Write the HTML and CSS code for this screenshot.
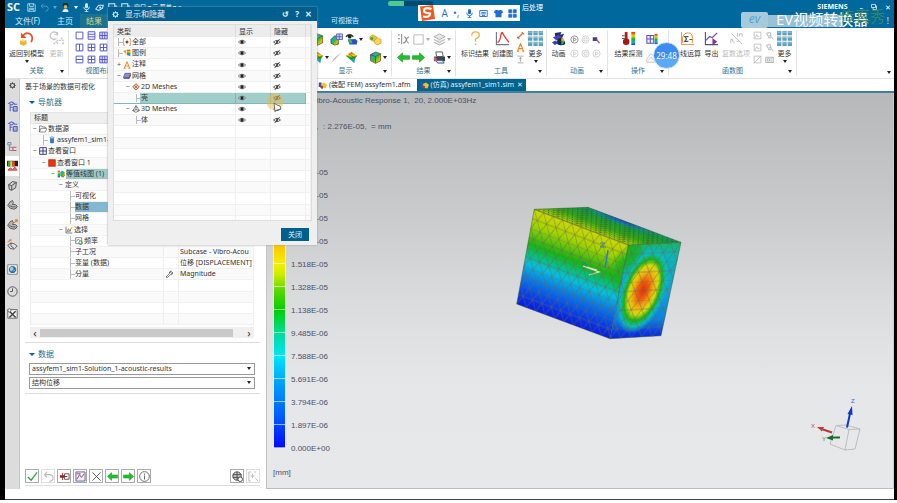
FILE: index.html
```
<!DOCTYPE html>
<html lang="zh-CN">
<head>
<meta charset="utf-8">
<title>Simcenter 后处理</title>
<link rel="stylesheet" href="styles.css">
</head>
<body>
<svg class="defs" aria-hidden="true">
  <defs>
    <linearGradient id="rain" x1="0" y1="0" x2="0" y2="1"><stop offset="0" stop-color="#e02a10"/><stop offset=".3" stop-color="#f4d000"/><stop offset=".55" stop-color="#19b52a"/><stop offset=".8" stop-color="#12a8e8"/><stop offset="1" stop-color="#1a35d8"/></linearGradient>
    <linearGradient id="rainD" x1="0" y1="0" x2="1" y2="1"><stop offset="0" stop-color="#1d3fe0"/><stop offset=".3" stop-color="#16b0c8"/><stop offset=".55" stop-color="#39c022"/><stop offset=".8" stop-color="#f5c400"/><stop offset="1" stop-color="#e02a10"/></linearGradient>
    <symbol id="gear" viewBox="0 0 12 12"><circle cx="6" cy="6" r="3.4" fill="none" stroke="currentColor" stroke-width="1.8"/><path d="M6 .5v2M6 9.5v2M.5 6h2M9.5 6h2M2.1 2.1l1.4 1.4M8.5 8.5l1.4 1.4M9.9 2.1L8.500 3.500M3.500 8.500L2.100 9.900" stroke="currentColor" stroke-width="1.6"/></symbol>
    <symbol id="eye" viewBox="0 0 12 12"><path d="M.5 6Q6 .5 11.500 6Q6 11.500 .5 6z" fill="#fff" stroke="#444" stroke-width="1"/><circle cx="6" cy="6" r="2.600" fill="#222"/></symbol>
    <symbol id="hid" viewBox="0 0 12 12"><path d="M.8 6Q6 1 11.200 6Q6 11 .8 6z" fill="none" stroke="#444" stroke-width="1.300"/><circle cx="6" cy="6" r="1.800" fill="#666"/><path d="M2.500 10.500l7.500-9" stroke="#333" stroke-width="1.300"/></symbol>
    <symbol id="save" viewBox="0 0 12 12"><path d="M1 1h8.500L11 2.500V11H1zM3.500 1v3.500h5V1M3 11V7h6v4M4 8.500h4" fill="none" stroke="currentColor"/></symbol>
    <symbol id="undo" viewBox="0 0 12 12"><path d="M4.500 1L1.500 4l3 3M1.500 4h5.500q4 0 4 3.500T7 11" fill="none" stroke="currentColor" stroke-width="1.200"/></symbol>
    <symbol id="mic" viewBox="0 0 12 12"><rect x="4" y="0" width="4" height="7" rx="2" fill="currentColor"/><path d="M2.300 5q0 4 3.700 4t3.700-4M6 9v2.500M3.500 11.500h5" fill="none" stroke="currentColor" stroke-width="1.200"/></symbol>
    <symbol id="head" viewBox="0 0 12 12"><path d="M3 0h6l1 4-2 3H4L2 4z" fill="#1b2b38"/><circle cx="6" cy="5" r="2.500" fill="#d6b24a"/><path d="M2 12q0-4 4-4t4 4z" fill="#eee"/></symbol>
    <symbol id="tag" viewBox="0 0 12 12"><path d="M1 8l4-5h6l-1 4-5 3z" fill="none" stroke="currentColor" stroke-width="1.400"/><circle cx="7" cy="6" r="1.500" fill="currentColor"/></symbol>
    <symbol id="win" viewBox="0 0 12 12"><path d="M1 1h8v6H1zM4 7v4h7V4H9" fill="none" stroke="currentColor" stroke-width="1.400"/></symbol>
    <symbol id="ret" viewBox="0 0 16 16"><path d="M4 5.500Q7 .5 11.500 3T13 12" fill="none" stroke="#e0522c" stroke-width="1.800"/><path d="M2 1.500v6h6z" fill="#e0522c"/><path d="M1 10.500l3-1.500 4 1v4l-3 1.800-4-1.300z" fill="#f2b32e"/><path d="M1 10.500l4 1 3-1.500-4-1z" fill="#ffe08a"/></symbol>
    <symbol id="upd" viewBox="0 0 16 16"><path d="M9 3.500A4 4 0 1 0 8 8M9 1v3H6" fill="none" stroke="#c4c4c4" stroke-width="1.300"/><path d="M5 14l3-3M9 14v-4h6v4M13 7l2 3" fill="none" stroke="#c4c4c4" stroke-width="1.500" stroke-dasharray="2 1"/></symbol>
    <symbol id="l1" viewBox="0 0 12 12"><path d="M1.500 1.500h9v9h-9z" fill="#fff" stroke="#5558c4" stroke-width="1.300"/></symbol>
    <symbol id="l2" viewBox="0 0 12 12"><path d="M1.500 1h9v10h-9zM1.500 4.300h9M1.500 7.700h9" fill="#fff" stroke="#5558c4" stroke-width="1.300"/></symbol>
    <symbol id="l3" viewBox="0 0 12 12"><path d="M1.500 1.500h9v9h-9zM6 1.500v9" fill="#fff" stroke="#5558c4" stroke-width="1.300"/></symbol>
    <symbol id="l4" viewBox="0 0 12 12"><path d="M1.500 1.500h9v9h-9zM6 1.500v9M1.500 6h9" fill="#fff" stroke="#5558c4" stroke-width="1.300"/></symbol>
    <symbol id="l5" viewBox="0 0 12 12"><path d="M1 1.500h10v9H1zM4.300 1.500v9M7.700 1.500v9M1 6h10" fill="#dfe0ff" stroke="#5558c4" stroke-width="1.300"/></symbol>
    <symbol id="l6" viewBox="0 0 12 12"><path d="M1.500 1.500h9v9h-9zM1.500 6h9" fill="#fff" stroke="#5558c4" stroke-width="1.300"/></symbol>
    <symbol id="cubeA" viewBox="0 0 14 14"><path d="M1 7l4-4 4 1v8l-4 1-4-2z" fill="url(#rainD)" stroke="#333" stroke-width=".7"/><path d="M7 1h6.500v6H7z" fill="#c7cdf0" stroke="#6266b8"/><path d="M7 4h6.500M10 1v6" stroke="#6266b8"/></symbol>
    <symbol id="eyeC" viewBox="0 0 14 14"><path d="M1 4Q5 0 9 4" fill="none" stroke="#333" stroke-width="1.500"/><circle cx="5" cy="4" r="2" fill="#222"/><path d="M3 7l8-.5 2.500 2-1 4H5z" fill="#2450c8"/><path d="M3 7h4l1 4H5z" fill="#38b848"/></symbol>
    <symbol id="gold" viewBox="0 0 14 14"><path d="M1 4l3-2 4 2v3L5 9 1 7z" fill="#f0c030" stroke="#b68a14" stroke-width=".6"/><path d="M6 8l3-3 4 2v4l-4 2-3-2z" fill="#f7d759" stroke="#b68a14" stroke-width=".6"/><circle cx="3" cy="6" r="1.700" fill="#3cae45"/></symbol>
    <symbol id="surf" viewBox="0 0 14 14"><path d="M1 5l6-4 6 4-2 3-1 5-5-4z" fill="url(#rain)"/><path d="M1 5l6 3 6-3M4 3l7 5" stroke="#333" stroke-width=".5" fill="none"/></symbol>
    <symbol id="cube" viewBox="0 0 14 14"><path d="M1.500 4L7 1l5.500 2v7.500L7 13.300l-5.500-3z" fill="url(#rainD)" stroke="#7a4a20" stroke-width=".8"/><path d="M1.500 4L7 6l5.500-3M7 6v7" fill="none" stroke="#444" stroke-width=".7"/></symbol>
    <symbol id="pen" viewBox="0 0 14 14"><path d="M12.500 1L6 8.500 1.500 13l3-5.500z" fill="#bbb"/></symbol>
    <symbol id="lx" viewBox="0 0 14 14"><path d="M1 2h2M1 6h2M1 10h2M5 1v11M7.500 4q2 0 2.500 3t2.800 4M13 4q-2 .5-3 3.500T6.500 11" fill="none" stroke="#909090" stroke-width="1.200"/></symbol>
    <symbol id="box" viewBox="0 0 14 14"><path d="M2 2h10v10H2z" fill="#fff" stroke="#b5b5b5"/></symbol>
    <symbol id="lay" viewBox="0 0 14 14"><path d="M1 4l6-3 6 3-6 3zM1 7l6 3 6-3M1 10l6 3 6-3" fill="#e8e8e8" stroke="#aaa"/></symbol>
    <symbol id="al" viewBox="0 0 14 14"><path d="M.5 7L6 2v3h7.500v4H6v3z" fill="#1fc22c" stroke="#118a1c" stroke-width=".6"/></symbol>
    <symbol id="ar" viewBox="0 0 14 14"><path d="M13.500 7L8 2v3H.5v4H8v3z" fill="#1fc22c" stroke="#118a1c" stroke-width=".6"/></symbol>
    <symbol id="prn" viewBox="0 0 14 14"><path d="M3 1h7l1 5H4z" fill="#fff" stroke="#555"/><path d="M1 6h12v5H1z" fill="#3c4450"/><path d="M3 10h7l2 3H5z" fill="#d8e6ff" stroke="#456"/><path d="M1 6l3 2v3L1 10z" fill="#c66"/></symbol>
    <symbol id="qm" viewBox="0 0 16 16"><path d="M4 5Q4 1 8 1t4 3.500Q12 7 8 8.500V11.500M8 13.300v2" fill="none" stroke="#f0b040" stroke-width="1.400"/></symbol>
    <symbol id="plot" viewBox="0 0 16 16"><path d="M1.500 1v13.500H15" fill="none" stroke="#778" stroke-width="1.200"/><path d="M2.500 12Q5 12 6 6t2-4 3 5 4 5" fill="none" stroke="#e04038" stroke-width="1.400"/></symbol>
    <symbol id="ham" viewBox="0 0 12 12"><path d="M3 9l6-6" stroke="#e07a3a" stroke-width="2"/><path d="M7.500 1.500l3.500 3M1.500 8l3 2.500" stroke="#9a6a4a" stroke-width="1.400"/></symbol>
    <symbol id="la" viewBox="0 0 12 12"><path d="M2 11l4-10 4 10M3.500 7.500h5M1 11h3M8 11h3" fill="none" stroke="#ee8722" stroke-width="1.500"/></symbol>
    <symbol id="lim" viewBox="0 0 12 12"><path d="M2 1.500h8M2 10.500h8M6 3v6M4.500 5L6 3l1.500 2" fill="none" stroke="#999"/></symbol>
    <symbol id="grid" viewBox="0 0 15 15"><path d="M0 0h4.300v4.300H0zM5.400 0h4.300v4.300H5.400zM10.700 0H15v4.300h-4.300zM0 5.400h4.300v4.300H0zM5.400 5.400h4.300v4.300H5.400zM10.700 5.400H15v4.300h-4.300zM0 10.700h4.300V15H0zM5.400 10.700h4.300V15H5.400zM10.700 10.700H15V15h-4.300z" fill="#5c9fbd"/><path d="M0 1.200h15M0 6.600h15M0 11.900h15" stroke="#a9cddd" stroke-width=".8"/></symbol>
    <symbol id="anim" viewBox="0 0 16 16"><path d="M4 2l7-1-1 3 4-1-2 4-7 2z" fill="#222a6a"/><path d="M2 7l6-3 4 3-6 3z" fill="#4a3fc0"/><path d="M7 9q4-4 7 1t-2 5q-4 1-6-2z" fill="#182438"/><path d="M11 7q3 1 3 4t-3 4z" fill="url(#rain)"/><path d="M1 12l4-2 3 3-4 2z" fill="#3045aa"/></symbol>
    <symbol id="play" viewBox="0 0 12 12"><circle cx="6" cy="6" r="4.800" fill="none" stroke="currentColor"/><path d="M4.600 3.500L8.500 6l-3.900 2.500z" fill="none" stroke="currentColor"/></symbol>
    <symbol id="stop" viewBox="0 0 12 12"><circle cx="6" cy="6" r="4.800" fill="none" stroke="currentColor"/><path d="M4 4h4v4H4z" fill="none" stroke="currentColor"/></symbol>
    <symbol id="film" viewBox="0 0 12 12"><path d="M1 3h6v5H1z" fill="#44407a"/><path d="M6 6l4 5" stroke="#a05ab0" stroke-width="1.800"/></symbol>
    <symbol id="probe" viewBox="0 0 16 16"><path d="M4 1h3v8H4z" fill="#b02018"/><circle cx="5.500" cy="11.500" r="3.500" fill="#a51612"/><path d="M11 1h4v14h-4z" fill="url(#rain)"/><path d="M1 5h3M1 8h3" stroke="#555"/></symbol>
    <symbol id="tile" viewBox="0 0 14 14"><path d="M1 3h8v9H1zM5 3v9M1 7h8" fill="#eef" stroke="#5a50b8" stroke-width="1.200"/><path d="M10 1h3.500v12H10z" fill="url(#rain)"/></symbol>
    <symbol id="mnt" viewBox="0 0 14 14"><path d="M1 9l5-6 6 6v4H1zM3 11l3-4 3 4" fill="none" stroke="#bbb"/></symbol>
    <symbol id="sig" viewBox="0 0 16 16"><path d="M1.500 1v13.500H15M3 13Q1 3 8 2t5 11" fill="none" stroke="#e68a3a"/><path d="M9 6H5l2 2.500L5 11h4M10 9h3" fill="none" stroke="#555" stroke-width="1.200"/></symbol>
    <symbol id="exp" viewBox="0 0 16 16"><path d="M1.500 1v13.500H15" fill="none" stroke="#557" stroke-width="1.200"/><path d="M2 10l4-4 3 1 5-5" fill="none" stroke="#7858b8" stroke-width="1.500"/><path d="M9 10v-2.500l5 4-5 4V13" fill="#8a2f8f"/></symbol>
    <symbol id="reim" viewBox="0 0 16 16"><path d="M3 3l11 11M9 2v4M11 6V3h3v3M2 13V9h2v2l2 2M8 11h3" fill="none" stroke="#bbb"/></symbol>
    <symbol id="gA" viewBox="0 0 12 12"><path d="M1.500 1.500h9v9h-9zM3 9l2-4 2 3 1.500-1.500" fill="none" stroke="#b4b4b4"/></symbol>
    <symbol id="gB" viewBox="0 0 12 12"><path d="M2 3l5-1 1 4-4 1zM7 6l4 5M4 9h4" fill="none" stroke="#b4b4b4" stroke-width="1.300"/></symbol>
    <symbol id="gC" viewBox="0 0 12 12"><path d="M1.500 1.500h9v9h-9zM1 11L11 1" fill="none" stroke="#b4b4b4"/></symbol>
    <symbol id="gD" viewBox="0 0 12 12"><path d="M1 3h10v7H1zM3 5h3v3H3zM7 5h3M7 8h3" fill="none" stroke="#aaa" stroke-width="1.200"/></symbol>
    <symbol id="simf" viewBox="0 0 12 12"><path d="M1 2h4v6H1z" fill="#3a51b0"/><path d="M4 4l4-2 4 3-2 5-5-1z" fill="#f0c22e"/><path d="M4 6l3 1-1 4-3-2z" fill="#a5403a"/></symbol>
    <symbol id="fold" viewBox="0 0 12 12"><path d="M.7 10.500V1.500h3.800l1 1.500h4v2M.7 10.500l2-5.500h9l-2 5.500z" fill="#fff" stroke="#555"/></symbol>
    <symbol id="cyl" viewBox="0 0 12 12"><path d="M3 2h6v8q-3 2-6 0z" fill="#3b7cc0"/><ellipse cx="6" cy="2.500" rx="3" ry="1.500" fill="#b9d8f2" stroke="#2a5f9c" stroke-width=".6"/></symbol>
    <symbol id="w4" viewBox="0 0 12 12"><path d="M1 1h10v10H1zM6 1v10M1 6h10" fill="#fff" stroke="#26267a" stroke-width="1.300"/></symbol>
    <symbol id="red" viewBox="0 0 12 12"><path d="M1 1h10v10H1z" fill="#e83410" stroke="#b81c00"/></symbol>
    <symbol id="cont" viewBox="0 0 12 12"><path d="M1 1h3.500v10H1z" fill="url(#rain)"/><path d="M5 3l3-2 3.500 2v6L8 11 5 9z" fill="url(#rainD)"/><path d="M6 8l3 3 2.500-4" fill="none" stroke="#c22"/></symbol>
    <symbol id="sel" viewBox="0 0 12 12"><path d="M1.500 1v9.500H11" fill="none" stroke="#445"/><path d="M3 9l2-5 2 3 3.500-5" fill="none" stroke="#e08322" stroke-width="1.500"/><path d="M4 8l5-1" stroke="#3562b8" stroke-width="1.300"/></symbol>
    <symbol id="freq" viewBox="0 0 12 12"><path d="M1 1h9v9H1zM2 7l3-4 3 3" fill="#fff" stroke="#556"/><circle cx="8.500" cy="8.500" r="2.700" fill="none" stroke="#32a83c" stroke-width="1.400"/></symbol>
    <symbol id="wr" viewBox="0 0 12 12"><path d="M1.500 10.500l5-5Q6 2 9.500 1.500L8.500 4l1.500 1 1.500-1.500Q12 7 8 7l-4.500 4.500z" fill="#fff" stroke="#444" stroke-width="1.100"/></symbol>
    <symbol id="all" viewBox="0 0 12 12"><path d="M3 1H1v10h2M9 1h2v10H9" fill="none" stroke="#e2823a" stroke-width="1.200"/><circle cx="6" cy="6" r="2" fill="#444"/><path d="M6 2v8M3 6h6" stroke="#777" stroke-width=".7"/></symbol>
    <symbol id="lgd" viewBox="0 0 12 12"><path d="M0 3l5-2v8L3 6z" fill="#f0a32c"/><path d="M6 1h5v10l-5-2z" fill="url(#rain)"/></symbol>
    <symbol id="mesh" viewBox="0 0 12 12"><path d="M3 2h8.500L9 8.500H.5z" fill="#8a8cd8" stroke="#444a90"/><path d="M1 9.500h8.500L11.500 4" fill="none" stroke="#333" stroke-width="1.200"/></symbol>
    <symbol id="m2" viewBox="0 0 12 12"><path d="M6 1l5 5-5 4.500L1 6z" fill="#f4c8a8" stroke="#a8522a" stroke-width="1.300"/><path d="M3.500 3.500l5 5M8.500 3.500l-5 5" stroke="#a8522a"/></symbol>
    <symbol id="m3" viewBox="0 0 12 12"><path d="M6 1l3 4 2 3.500L6 11 1 8.500 3.500 5zM6 1v6l5 1.500M6 7L1 8.500" fill="#fff" stroke="#444"/></symbol>
    <symbol id="s1" viewBox="0 0 14 14"><path d="M2 3l4-2 3 2-3 2zM4 5v8M4 8h3M7 11h5M9 4h4" fill="none" stroke="#5360c8" stroke-width="1.300"/><path d="M8 7h5v6H8z" fill="#8fb2e8" stroke="#444a90"/></symbol>
    <symbol id="s2" viewBox="0 0 14 14"><path d="M1 2h4v3H1zM3 5v7h4M3 8h4" fill="none" stroke="#7b86a8" stroke-width="1.200"/><path d="M12 8H7.500v4H12" fill="none" stroke="#d05050" stroke-width="1.300"/></symbol>
    <symbol id="s3" viewBox="0 0 14 14"><path d="M0 1h14v7H0z" fill="#222"/><path d="M1 1.500h3v7H1z" fill="#28b04a"/><path d="M4 1.500h3v7H4z" fill="#f0d32a"/><path d="M7 1.500h3v7H7z" fill="#e34b2b"/><path d="M1 13l3-3 3 2 3-3 3 4z" fill="#d77" stroke="#c33"/></symbol>
    <symbol id="s4" viewBox="0 0 14 14"><path d="M2 6l5-4 5 1-1 7-5 3-3-1zM2 6l4 1 6-4M6 7v6" fill="#ccc" stroke="#444" stroke-width="1.100"/></symbol>
    <symbol id="s5" viewBox="0 0 14 14"><path d="M1 8Q4 2 7 2q2 3 0 5 4-1 6 2 0 3-4 4-6 0-8-5z" fill="#bbb" stroke="#444"/><path d="M3 8q3 3 8 2" fill="none" stroke="#444"/></symbol>
    <symbol id="s5o" viewBox="0 0 14 14"><use href="#s5"/><path d="M9 5l4-4M10 1h3v3" stroke="#e8862e" stroke-width="1.600" fill="none"/></symbol>
    <symbol id="s6" viewBox="0 0 14 14"><path d="M1 8l4-3 4 1 4 3-4 4-5-1zM5 5v4l4 3" fill="#ddd" stroke="#444"/><path d="M1 4l4-3M3 1h2v2" stroke="#e8862e" stroke-width="1.500" fill="none"/></symbol>
    <symbol id="s7" viewBox="0 0 14 14"><path d="M1 1h12v12H1z" fill="#fff" stroke="#666"/><circle cx="7" cy="7" r="4.600" fill="#2377a8"/><path d="M4 5l3-1 1 3-3 2zM8 9l2-1" fill="#9ed0e8" stroke="#9ed0e8"/></symbol>
    <symbol id="s8" viewBox="0 0 14 14"><circle cx="7" cy="7" r="6" fill="none" stroke="#555" stroke-width="1.200"/><path d="M7 3v4H4" fill="none" stroke="#555" stroke-width="1.200"/></symbol>
    <symbol id="s9" viewBox="0 0 14 14"><path d="M1 2h12v11H1z" fill="#eee" stroke="#555"/><path d="M3 12l8-8M3 4l8 8" stroke="#444" stroke-width="1.800"/><circle cx="3" cy="3" r="2" fill="#fff" stroke="#555"/></symbol>
    <symbol id="ok" viewBox="0 0 12 12"><path d="M1 6.500L4.500 10 11 1.500" fill="none" stroke="#25a83a" stroke-width="1.400"/></symbol>
    <symbol id="app" viewBox="0 0 12 12"><path d="M6 3h5v6H6z" fill="#fff" stroke="#555"/><path d="M1 4.500h5v3H1z" fill="#c33"/><path d="M4 2v8M1 6h8" stroke="#822"/></symbol>
    <symbol id="pl2" viewBox="0 0 12 12"><path d="M1 1h10v10H1z" fill="#eee" stroke="#555f9a"/><path d="M2 9l3-5 2 3 3-4" fill="none" stroke="#a03aa0"/><path d="M2 3h4" stroke="#c33"/></symbol>
    <symbol id="xx" viewBox="0 0 12 12"><path d="M1.500 1.500l9 9M10.500 1.500l-9 9" stroke="#555"/></symbol>
    <symbol id="inf" viewBox="0 0 12 12"><circle cx="6" cy="6" r="5.300" fill="none" stroke="#555" stroke-width=".9"/><path d="M6 2.800v1.300M6 5v4.300" stroke="#555"/></symbol>
    <symbol id="glob" viewBox="0 0 12 12"><circle cx="5.500" cy="5.500" r="4.600" fill="#ccc" stroke="#444"/><path d="M1 4h9M1 7h9M5.500 1v9" stroke="#444"/><circle cx="9" cy="9" r="2.500" fill="#fff" stroke="#444"/></symbol>
    <symbol id="pick" viewBox="0 0 12 12"><path d="M3 1H1v10h2M7 1h2M5 3v5M3 5.500h4M8 8l3 3" fill="none" stroke="#b5b5b5"/></symbol>
  </defs>
</svg>

<div class="app">
  <header class="top">
    <div class="titlebar">
      <span class="brand">SC</span>
      <button class="qa" aria-label="保存"><svg><use href="#save"/></svg></button>
      <button class="qa dim" aria-label="撤消"><svg><use href="#undo"/></svg></button><i class="dd dim"></i>
      <button class="qa" aria-label="用户"><svg><use href="#head"/></svg></button><i class="dd"></i>
      <button class="qa" aria-label="语音"><svg><use href="#mic"/></svg></button>
      <button class="qa" aria-label="标记"><svg><use href="#tag"/></svg></button>
      <button class="qa" aria-label="窗口"><svg><use href="#win"/></svg></button>
      <button class="qa" aria-label="切换窗口"><svg><use href="#win"/></svg></button><span class="quick">窗口 ▾ 三 菜单 ▾ =</span>
      <span class="doc">后处理</span>
      <span class="maker">SIEMENS</span>
      <span class="winctl"><button aria-label="最小化">–</button><button aria-label="还原"><svg><use href="#win"/></svg></button><button aria-label="关闭窗口">✕</button></span>
    </div>
    <nav class="menu"><a href="#">文件(F)</a><a href="#">主页</a><a href="#" class="on">结果</a><a href="#" class="report">可视报告</a><span class="help">!</span></nav>
  </header>

  <section class="ribbon">
    <div class="group g-link">
      <div class="tools">
        <button class="big"><svg><use href="#ret"/></svg>返回到模型<i class="dd"></i></button>
        <button class="big off"><svg><use href="#upd"/></svg>更新</button>
      </div>
      <div class="cap"><span>关联</span><i class="dd"></i></div>
    </div>
    <div class="group g-layout">
      <div class="tools nine"><svg><use href="#l1"/></svg><svg><use href="#l2"/></svg><svg><use href="#l5"/></svg><svg><use href="#l3"/></svg><svg><use href="#l4"/></svg><svg><use href="#l4"/></svg><svg><use href="#l6"/></svg><svg><use href="#l4"/></svg><svg><use href="#l5"/></svg></div>
      <div class="cap"><span>视图布局</span></div>
    </div>
    <div class="group g-under"></div>
    <div class="group g-show">
      <div class="tools pairs four"><svg><use href="#cube"/></svg><svg><use href="#cubeA"/></svg><span><svg><use href="#eyeC"/></svg><i class="dd"></i></span><svg><use href="#gold"/></svg><span><svg><use href="#surf"/></svg><i class="dd"></i></span><svg><use href="#pen"/></svg><svg><use href="#surf"/></svg><span><svg><use href="#cube"/></svg><i class="dd"></i></span></div>
      <div class="cap"><span>显示</span><i class="dd"></i></div>
    </div>
    <div class="group g-result">
      <div class="tools pairs three"><svg><use href="#lx"/></svg><span><svg><use href="#box"/></svg><i class="dd soft"></i></span><span><svg><use href="#lay"/></svg><i class="dd soft"></i></span><svg><use href="#al"/></svg><svg><use href="#ar"/></svg><span><svg><use href="#prn"/></svg><i class="dd"></i></span></div>
      <div class="cap"><span>结果</span><i class="dd"></i></div>
    </div>
    <div class="group g-tool">
      <div class="tools">
        <button class="big"><svg><use href="#qm"/></svg>标识结果</button>
        <button class="big"><svg><use href="#plot"/></svg>创建图</button>
        <div class="col"><svg><use href="#ham"/></svg><svg><use href="#la"/></svg><svg><use href="#lim"/></svg></div>
        <button class="big"><svg><use href="#grid"/></svg>更多<i class="dd"></i></button>
      </div>
      <div class="cap"><span>工具</span><i class="dd"></i></div>
    </div>
    <div class="group g-anim">
      <div class="tools">
        <button class="big"><svg><use href="#anim"/></svg>动画</button>
        <div class="six"><svg><use href="#play"/></svg><svg class="soft"><use href="#stop"/></svg><svg><use href="#film"/></svg><svg class="soft"><use href="#play"/></svg><svg class="soft"><use href="#stop"/></svg><svg class="soft"><use href="#play"/></svg></div>
      </div>
      <div class="cap"><span>动画</span><i class="dd"></i></div>
    </div>
    <div class="group g-op">
      <div class="tools">
        <button class="big"><svg><use href="#probe"/></svg>结果探测</button>
        <div class="col two"><svg><use href="#tile"/></svg><svg><use href="#mnt"/></svg></div>
      </div>
      <div class="cap"><span>操作</span><i class="dd"></i></div>
    </div>
    <div class="group g-fn">
      <div class="tools">
        <button class="big"><svg><use href="#sig"/></svg>曲线运算</button>
        <button class="big"><svg><use href="#exp"/></svg>导出</button>
        <button class="big off"><svg><use href="#reim"/></svg>复数选项</button>
        <div class="col"><svg><use href="#gA"/></svg><svg><use href="#gA"/></svg><svg><use href="#gC"/></svg></div>
        <div class="col"><svg><use href="#gB"/></svg><svg><use href="#gB"/></svg><svg><use href="#gD"/></svg></div>
        <button class="big"><svg><use href="#grid"/></svg>更多<i class="dd"></i></button>
      </div>
      <div class="cap"><span>函数图</span><i class="dd"></i></div>
    </div>
    <div class="rest"><i class="dd"></i></div>
  </section>

  <main class="work">
    <nav class="rail">
      <a href="#" class="set" aria-label="设置"><svg><use href="#gear"/></svg></a>
      <div class="rail-a"><a href="#" aria-label="装配"><svg><use href="#s1"/></svg></a><a href="#" aria-label="约束"><svg><use href="#s1"/></svg></a><a href="#" aria-label="部件"><svg><use href="#s2"/></svg></a><a href="#" class="on" aria-label="后处理导航器"><svg><use href="#s3"/></svg></a><a href="#" aria-label="重用库"><svg><use href="#s4"/></svg></a><a href="#" aria-label="视图"><svg><use href="#s5"/></svg></a><a href="#" aria-label="模型"><svg><use href="#s5o"/></svg></a><a href="#" aria-label="特征"><svg><use href="#s6"/></svg></a></div>
      <div class="rail-b"><a href="#" aria-label="浏览器"><svg><use href="#s7"/></svg></a><a href="#" aria-label="历史"><svg><use href="#s8"/></svg></a><a href="#" aria-label="工具"><svg><use href="#s9"/></svg></a></div>
    </nav>

    <aside class="panel">
      <h1>基于场景的数据可视化</h1>
      <h2><i class="tri"></i>导航器</h2>
      <div class="tree">
        <div class="thead">标题</div>
        <div class="rows">
          <div class="row"><span class="d0"><b>−</b><svg><use href="#fold"/></svg>数据源</span><span></span><span></span></div>
          <div class="row"><span class="d1 leaf"><b></b><svg><use href="#cyl"/></svg>assyfem1_sim1-Solution_1</span><span></span><span></span></div>
          <div class="row"><span class="d0"><b>−</b><svg><use href="#w4"/></svg>查看窗口</span><span></span><span></span></div>
          <div class="row"><span class="d1"><b>−</b><svg><use href="#red"/></svg>查看窗口 1</span><span></span><span></span></div>
          <div class="row"><span class="d2"><b>−</b><svg><use href="#cont"/></svg><mark class="teal">等值线图 (1)</mark></span><span></span><span></span></div>
          <div class="row"><span class="d3"><b>−</b>定义</span><span></span><span></span></div>
          <div class="row"><span class="d4 leaf"><b></b>可视化</span><span></span><span></span></div>
          <div class="row"><span class="d4 leaf"><b></b><mark class="blue">数据</mark></span><span></span><span></span></div>
          <div class="row"><span class="d4 leaf"><b></b>网格</span><span></span><span></span></div>
          <div class="row"><span class="d3"><b>−</b><svg><use href="#sel"/></svg>选择</span><span></span><span></span></div>
          <div class="row"><span class="d4 leaf"><b></b><svg><use href="#freq"/></svg>频率</span><span></span><span></span></div>
          <div class="row"><span class="d4 leaf"><b></b>子工况</span><span></span><span>Subcase - Vibro-Acou</span></div>
          <div class="row"><span class="d4 leaf"><b></b>变量 (数据)</span><span></span><span>位移 [DISPLACEMENT]</span></div>
          <div class="row"><span class="d4 leaf"><b></b>分量</span><span><svg><use href="#wr"/></svg></span><span>Magnitude</span></div>
          <div class="row"><span></span><span></span><span></span></div>
          <div class="row"><span></span><span></span><span></span></div>
          <div class="row"><span></span><span></span><span></span></div>
          <div class="row"><span></span><span></span><span></span></div>
        </div>
        <div class="hscroll"><button aria-label="向左滚动">‹</button><i></i><button aria-label="向右滚动">›</button></div>
      </div>
      <section class="data">
        <h2><i class="tri"></i>数据</h2>
        <label class="pick"><select aria-label="结果集"><option>assyfem1_sim1-Solution_1-acoustic-results</option></select><i class="dd"></i></label>
        <label class="pick"><select aria-label="结果类型"><option>结构位移</option></select><i class="dd"></i></label>
      </section>
      <div class="actions">
        <button aria-label="确定"><svg><use href="#ok"/></svg></button><button class="dis" aria-label="撤消"><svg><use href="#undo"/></svg></button><button aria-label="应用"><svg><use href="#app"/></svg></button><button aria-label="绘图"><svg><use href="#pl2"/></svg></button><button aria-label="取消"><svg><use href="#xx"/></svg></button><button aria-label="上一个"><svg><use href="#al"/></svg></button><button aria-label="下一个"><svg><use href="#ar"/></svg></button><button aria-label="信息"><svg><use href="#inf"/></svg></button>
        <span class="push"></span><button aria-label="显示"><svg><use href="#glob"/></svg></button><button class="dis" aria-label="拾取"><svg><use href="#pick"/></svg></button>
      </div>
    </aside>

    <section class="stage">
      <div class="tabs"><a href="#" class="tab"><svg><use href="#simf"/></svg>(装配 FEM) assyfem1.afm</a><a href="#" class="tab on"><svg><use href="#simf"/></svg>(仿真) assyfem1_sim1.sim <em>✕</em></a></div>
      <div class="view">
        <p class="info">Subcase - Vibro-Acoustic Response 1,  20, 2.000E+03Hz</p>
        <p class="info range">: 0.000E+00,  : 2.276E-05,  = mm</p>
        <div class="legend">
          <div class="scale"></div>
          <ol><li>2.276E-05</li><li>2.087E-05</li><li>1.897E-05</li><li>1.707E-05</li><li>1.518E-05</li><li>1.328E-05</li><li>1.138E-05</li><li>9.485E-06</li><li>7.588E-06</li><li>5.691E-06</li><li>3.794E-06</li><li>1.897E-06</li><li>0.000E+00</li></ol>
        </div>
        <p class="info unit">[mm]</p>

        <svg class="model" viewBox="0 0 200 160">
          <defs>
            <linearGradient id="side" x1="0" y1="0" x2="0" y2="1"><stop offset="0" stop-color="#cfd800"/><stop offset=".16" stop-color="#a4d400"/><stop offset=".36" stop-color="#18b414"/><stop offset=".46" stop-color="#06bf7c"/><stop offset=".56" stop-color="#05bfdc"/><stop offset=".7" stop-color="#067de8"/><stop offset=".86" stop-color="#0640e8"/><stop offset="1" stop-color="#0718dc"/></linearGradient>
            <linearGradient id="face" x1="0" y1="0" x2="0" y2="1"><stop offset="0" stop-color="#1cb83c"/><stop offset=".14" stop-color="#09b8b0"/><stop offset=".5" stop-color="#08a8e0"/><stop offset=".78" stop-color="#0880e8"/><stop offset=".9" stop-color="#0638e4"/><stop offset="1" stop-color="#0618d8"/></linearGradient>
            <linearGradient id="lid" x1="0" y1="1" x2="0" y2="0"><stop offset="0" stop-color="#0c9c70"/><stop offset=".2" stop-color="#169c40"/><stop offset=".6" stop-color="#34ac18"/><stop offset="1" stop-color="#b4cc08"/></linearGradient>
            <radialGradient id="hot"><stop offset="0" stop-color="#f02c08"/><stop offset=".2" stop-color="#f05a0a"/><stop offset=".42" stop-color="#f0b80c"/><stop offset=".56" stop-color="#d4dc08"/><stop offset=".7" stop-color="#18b418"/><stop offset=".84" stop-color="#08c0b8"/><stop offset="1" stop-color="#08b0e0" stop-opacity="0"/></radialGradient>
            <radialGradient id="cold"><stop offset="0" stop-color="#1848d0"/><stop offset=".5" stop-color="#1280c0" stop-opacity=".9"/><stop offset="1" stop-color="#12a080" stop-opacity="0"/></radialGradient>
            <radialGradient id="edge"><stop offset="0" stop-color="#16b418"/><stop offset=".5" stop-color="#16b418" stop-opacity=".8"/><stop offset="1" stop-color="#16b418" stop-opacity="0"/></radialGradient>
            <pattern id="tri" width="10" height="20" patternUnits="userSpaceOnUse"><path d="M0 0h10M0 10h10M0 0l5 10L10 0M5 10L0 20M5 10l5 10" fill="none" stroke="#6b6258" stroke-width=".5"/></pattern>
            <pattern id="triF" width="20" height="20" patternUnits="userSpaceOnUse"><path d="M0 0h20M0 10h20M0 0l10 10L20 0M10 10L0 20M10 10l10 10" fill="none" stroke="#6b6258" stroke-width=".7"/></pattern>
            <pattern id="quad" width="5" height="9" patternUnits="userSpaceOnUse"><path d="M0 0h5M0 0v9M0 9l5-9" fill="none" stroke="#2c4820" stroke-width=".6"/></pattern>
            <clipPath id="cf"><path d="M128.300 55L181 52.300 161 145.700 110 148.700z"/></clipPath>
            <clipPath id="cl"><path d="M34.300 19.300L88 17.300 181 52.300 128.300 55z"/></clipPath>
            <clipPath id="cs"><path d="M34.300 19.300L128.300 55 110 148.700 16.700 114z"/></clipPath>
          </defs>
          <g clip-path="url(#cs)">
            <g transform="matrix(.94 .357 -.176 .947 34.300 19.300)"><path d="M-1-1h102v102H-1z" fill="url(#side)"/><ellipse cx="101" cy="28" rx="15" ry="26" fill="url(#edge)"/><path d="M-1-1h102v102H-1z" fill="url(#tri)"/></g>
          </g>
          <g clip-path="url(#cf)">
            <path d="M105 48h80v105h-80z" fill="url(#face)"/>
            <ellipse cx="129" cy="62" rx="17" ry="24" fill="url(#edge)"/>
            <ellipse cx="143" cy="100" rx="23" ry="46" transform="rotate(21 143 100)" fill="url(#hot)"/>
            <g transform="matrix(.527 -.027 -.183 .937 128.300 55)"><path d="M-1-1h103v103H-1z" fill="url(#triF)"/></g>
          </g>
          <g clip-path="url(#cl)">
            <g transform="matrix(.94 .357 .537 -.020 34.300 19.300)"><path d="M-1-1h103v103H-1z" fill="url(#lid)"/></g>
            <ellipse cx="123" cy="31" rx="42" ry="5" transform="rotate(20 123 31)" fill="url(#cold)"/>
            <g transform="matrix(.94 .357 .537 -.020 34.300 19.300)"><path d="M-1-1h103v103H-1z" fill="url(#quad)"/></g>
          </g>
          <path d="M34.300 19.300L88 17.300 181 52.300 161 145.700 110 148.700 16.700 114zM34.300 19.300L128.300 55 181 52.300M128.300 55L110 148.700" fill="none" stroke="#3a5a30" stroke-width=".5"/>
          <path d="M105 78l3-18" stroke="#3474d8" stroke-width="1.500"/><path d="M83 76l16 6-10 3M87 77l10 3" fill="none" stroke="#e4d8c8" stroke-width="1.300"/><path d="M90 84h9" stroke="#50b050"/><path d="M100 53h5l-5 4h6M82 71l5 4M86 71l-3 4" fill="none" stroke="#2878a8" stroke-width=".8"/>
        </svg>
        <svg class="triad" viewBox="0 0 60 60">
          <path d="M24 27.500L34 27l14 4-11 0.500zM24 27.500L18 46l15 6 10-1 5-20M37 31.500L33 52" fill="none" stroke="#b0b3b6" stroke-width=".8"/>
          <path d="M35 29.500l3-14" stroke="#0a38c8" stroke-width="2"/><path d="M40 8l-4.500 8 5 1z" fill="#0a38c8"/>
          <path d="M20 34.500l-9-3" stroke="#b83a30" stroke-width="2"/><path d="M5 29l7 0-2 4.500z" fill="#c43c30"/>
          <path d="M28 39.500H19" stroke="#15702a" stroke-width="2"/><path d="M14 40l7-3v5.500z" fill="#15702a"/>
          <text x="39" y="5" fill="#4060e0">Z</text><text x="-1" y="30" fill="#c85048">X</text><text x="10" y="43" fill="#308040">Y</text>
        </svg>
      </div>
    </section>
  </main>
  <footer class="status"></footer>

  <section class="dialog" role="dialog" aria-label="显示和隐藏">
    <header><svg><use href="#gear"/></svg><strong>显示和隐藏</strong><button aria-label="重置">↺</button><button aria-label="帮助">?</button><button aria-label="关闭对话框">✕</button></header>
    <div class="frame">
      <table>
        <thead><tr><th>类型</th><th>显示</th><th>隐藏</th><th></th></tr></thead>
        <tbody>
          <tr><td class="d0 leaf"><b></b><svg><use href="#all"/></svg>全部</td><td><svg><use href="#eye"/></svg></td><td><svg><use href="#hid"/></svg></td><td></td></tr>
          <tr><td class="d0 leaf"><b></b><svg><use href="#lgd"/></svg>图例</td><td><svg><use href="#eye"/></svg></td><td><svg><use href="#hid"/></svg></td><td></td></tr>
          <tr><td class="d0"><b>+</b><svg><use href="#la"/></svg>注释</td><td><svg><use href="#eye"/></svg></td><td><svg><use href="#hid"/></svg></td><td></td></tr>
          <tr><td class="d0"><b>−</b><svg><use href="#mesh"/></svg>网格</td><td><svg><use href="#eye"/></svg></td><td><svg><use href="#hid"/></svg></td><td></td></tr>
          <tr><td class="d1"><b>−</b><svg><use href="#m2"/></svg>2D Meshes</td><td><svg><use href="#eye"/></svg></td><td><svg><use href="#hid"/></svg></td><td></td></tr>
          <tr class="hit"><td class="d2 leaf"><b></b><mark>壳</mark></td><td><svg><use href="#eye"/></svg></td><td><svg><use href="#hid"/></svg></td><td></td></tr>
          <tr><td class="d1"><b>−</b><svg><use href="#m3"/></svg>3D Meshes</td><td><svg><use href="#eye"/></svg></td><td><svg><use href="#hid"/></svg></td><td></td></tr>
          <tr><td class="d2 leaf"><b></b>体</td><td><svg><use href="#eye"/></svg></td><td><svg><use href="#hid"/></svg></td><td></td></tr>
          <tr><td></td><td></td><td></td><td></td></tr><tr><td></td><td></td><td></td><td></td></tr><tr><td></td><td></td><td></td><td></td></tr><tr><td></td><td></td><td></td><td></td></tr><tr><td></td><td></td><td></td><td></td></tr><tr><td></td><td></td><td></td><td></td></tr><tr><td></td><td></td><td></td><td></td></tr><tr><td></td><td></td><td></td><td></td></tr><tr><td></td><td></td><td></td><td></td></tr>
        </tbody>
      </table>
    </div>
    <footer><button>关闭</button></footer>
    <svg class="cursor" viewBox="0 0 20 20"><circle cx="9" cy="7" r="8.500" fill="#f0b84a" fill-opacity=".5"/><path d="M8 8l1 8 2-1 4-1-1-3-3-1z" fill="#fff" stroke="#555" stroke-width=".8"/></svg>
  </section>

  <div class="pill"></div>
  <div class="ime"><svg class="logo" viewBox="0 0 18 18"><path d="M2 2.500L15 1l2 14-13 2z" fill="#f05a20"/><path d="M13.500 5Q7 3 6 6t6 3.500Q12 14 5 12.500" fill="none" stroke="#fff" stroke-width="2.200"/></svg><span>A</span><span>•,</span><svg><use href="#mic"/></svg><svg viewBox="0 0 12 12"><path d="M1 2h10v8H1zM3 4.500h6M3 6.500h6M4 8.500h4" fill="none" stroke="currentColor" stroke-width="1.200"/></svg><svg viewBox="0 0 12 12"><path d="M1 2l3-1q2 2 4 0l3 1 1 3-2 1v5H2V6L0 5z" fill="currentColor"/></svg><svg viewBox="0 0 12 12"><path d="M1 1h4v4H1zM7 1h4v4H7zM1 7h4v4H1zM7 7h4v4H7z" fill="currentColor" stroke="currentColor"/></svg></div>
  <div class="mark"><span class="ev">ev</span><span class="strip"></span><span class="name">EV视频转换器</span><span class="show">传真秀</span></div>
  <div class="clock">29:48</div>
</div>
</body>
</html>
```
FILE: styles.css
```
* { box-sizing: border-box; }
body { margin: 0; background: #fff; font: 7px/11px "Noto Sans", "Noto Sans CJK SC", sans-serif; color: #333; }
h1, h2, p, ol { margin: 0; padding: 0; font-weight: 400; }
ol { list-style: none; }
a { color: inherit; text-decoration: none; }
button { font: inherit; color: inherit; background: none; border: 0; padding: 0; margin: 0; }
svg { display: block; flex: none; width: 11px; height: 11px; overflow: visible; }
.defs { position: absolute; width: 0; height: 0; }
.dd { flex: none; width: 0; height: 0; border: 2px solid transparent; border-top: 3px solid #222; border-bottom: 0; }
.dd.soft { border-top-color: #aaa; }

.app { position: relative; display: flex; flex-direction: column; height: calc(100vh - 3px); min-height: 480px; border: solid #000; border-width: 0 3px 0 5px; overflow: hidden; }

.top { background: #00689c; color: #fff; height: 28px; }
.titlebar { position: relative; display: flex; align-items: center; gap: 4px; height: 14px; padding: 0 3px 0 2px; }
.brand { font: 700 11px/14px "Open Sans", sans-serif; margin-right: 3px; }
.qa svg { width: 9px; height: 9px; color: #d4e8f2; }
.dim { opacity: .4; }
.titlebar .dd { border-top-color: #fff; }
.quick { font-size: 6px; }
.doc { position: absolute; left: 517px; }
.maker { margin-left: auto; font: 700 7px/14px "Open Sans", sans-serif; }
.winctl { display: flex; align-items: center; gap: 8px; margin-left: 8px; }
.winctl svg { width: 6px; height: 6px; }
.menu { display: flex; align-items: center; height: 14px; font-size: 8px; line-height: 14px; color: #dcebf3; }
.menu a { padding-left: 10px; width: 42px; }
.menu a + a { width: 33px; }
.menu .on { background: #1a7291; color: #d8d878; padding-left: 6px; }
.menu .report { margin-left: 208px; width: 80px; font-size: 7px; }
.help { margin-left: auto; padding-right: 5px; }

.ribbon { flex: none; display: flex; height: 51px; background: #fff; border-bottom: 1px solid #e2e2e2; }
.group { flex: none; display: flex; flex-direction: column; margin: 2px 0; border-right: 1px solid #e3e3e3; }
.tools { flex: 1; display: flex; justify-content: center; }
.big { display: flex; flex-direction: column; align-items: center; white-space: nowrap; font-size: 7px; line-height: 9px; }
.big svg { width: 15px; height: 15px; margin: 1px 0 3px; }
.big .dd { margin-top: 2px; }
.off { color: #bbb; }
.cap { position: relative; height: 10px; line-height: 10px; color: #2f7390; text-align: center; }
.cap .dd { position: absolute; right: 4px; top: 4px; }
.g-link { width: 64px; }
.g-link .tools { gap: 5px; }
.g-layout { width: 62px; }
.nine { display: grid; grid-template-columns: repeat(3, 12px); justify-content: center; align-content: space-between; padding: 1px 14px 2px 0; }
.nine svg { width: 9px; height: 9px; }
.g-under { width: 169px; border: 0; }
.g-show { width: 92px; }
.pairs { display: grid; align-items: center; align-content: start; grid-auto-rows: 18px; }
.pairs svg { width: 13px; height: 13px; }
.pairs span { display: flex; align-items: center; gap: 1px; }
.four { grid-template-columns: 19px 15px 24px 22px; justify-content: end; }
.g-result { width: 64px; }
.three { grid-template-columns: 15px 21px 18px; }
.g-tool { width: 91px; }
.g-tool .tools { gap: 3px; padding-left: 2px; }
.col { display: flex; flex-direction: column; justify-content: space-between; padding: 1px 0 2px; }
.col svg { width: 9px; height: 9px; }
.g-anim { width: 61px; }
.six { display: grid; grid-template-columns: repeat(3, 11px); grid-auto-rows: 14px; padding: 5px 0 0 4px; }
.six svg { width: 9px; height: 9px; color: #777; }
.six svg.soft { color: #c4c4c4; }
.g-op { width: 61px; }
.g-op .tools { gap: 3px; padding-right: 4px; }
.two svg { width: 12px; height: 12px; }
.two { padding: 3px 0; }
.g-fn { width: 128px; }
.g-fn .tools { gap: 3px; }
.rest { flex: 1; display: flex; justify-content: flex-end; align-items: flex-end; padding: 0 3px 4px 0; }

.work { flex: 1; display: flex; min-height: 0; }
.rail { flex: none; width: 15px; background: #dcdcdc; border-right: 1px solid #c8c8c8; color: #444; }
.rail a { display: flex; align-items: center; justify-content: center; }
.rail .set { height: 12px; margin-bottom: 6px; }
.rail .set svg { width: 7px; height: 7px; }
.rail-a { display: grid; grid-auto-rows: 1fr; height: 157px; }
.rail-a .on { background: #fff; }
.rail-b { display: grid; grid-auto-rows: 22px; margin-top: 4px; }

.panel { flex: none; width: 247px; display: flex; flex-direction: column; padding: 2px 6px 3px 5px; background: #fff; border-right: 1px solid #c4c4c4; }
.panel h1 { font-size: 7px; line-height: 11px; height: 14px; }
.panel h2 { display: flex; align-items: center; gap: 3px; padding-left: 4px; font-size: 8px; line-height: 14px; color: #20728f; }
.tri { width: 0; height: 0; border: 3px solid transparent; border-top-color: #006394; border-bottom: 0; }
.tree { margin: 3px 6px 4px 5px; }
.thead { height: 12px; padding-left: 3px; background: #efefef; border: 1px solid #e4e4e4; line-height: 10px; }
.rows { display: grid; grid-auto-rows: 1fr; height: 201px; border: solid #eee; border-width: 0 1px; }
.row { display: grid; grid-template-columns: 1fr 15px 75px; min-height: 0; border-bottom: 1px solid #f1f1f1; overflow: hidden; white-space: nowrap; }
.row:nth-child(even) { background: #fafafa; }
.row span { display: flex; align-items: center; overflow: hidden; line-height: 10px; }
.row span + span { border-left: 1px solid #eee; padding-left: 1px; }
.rows svg { width: 8px; height: 8px; margin-right: 1px; }
.rows b, .dialog b { flex: none; width: 8px; color: #555; font-weight: 400; text-align: center; }
.row .d0 { padding-left: 0; }
.row .d1 { padding-left: 9px; }
.row .d2 { padding-left: 18px; }
.row .d3 { padding-left: 26px; }
.row .d4 { padding-left: 36px; }
.leaf b { align-self: stretch; margin-right: 0; background: linear-gradient(#bbb, #bbb) 3px 50% / 5px 1px no-repeat, linear-gradient(#bbb, #bbb) 3px 0 / 1px 100% no-repeat; }
mark { color: inherit; align-self: stretch; }
.teal { background: #9cc9c8; flex: 1; }
.blue { background: #84b8d0; flex: 1; }
.hscroll { display: flex; align-items: center; height: 11px; margin-top: 2px; background: #f0f0f0; }
.hscroll button { width: 10px; font-size: 11px; line-height: 9px; }
.hscroll i { flex: 1; height: 8px; margin-right: 11px; background: #c9c9c9; }
.data { border: solid #ddd; border-width: 1px 0; padding: 4px 5px 4px 4px; display: grid; gap: 2px; }
.panel .data h2 { padding-left: 0; }
.pick { position: relative; display: block; height: 12px; }
.pick select { display: block; width: 100%; height: 12px; padding: 0 2px; border: 1px solid #999; border-radius: 0; background: #fff; font: inherit; line-height: 10px; color: #333; appearance: none; }
.pick .dd { position: absolute; right: 4px; top: 4px; }
.actions { display: flex; gap: 2px; margin-top: auto; padding-bottom: 2px; border-bottom: 1px solid #ddd; }
.actions button { display: grid; place-items: center; width: 14px; height: 14px; border: 1px solid #aaa; color: #555; }
.actions .dis { border-color: #ddd; color: #bbb; }
.push { flex: 1; }

.stage { flex: 1; min-width: 0; display: flex; flex-direction: column; }
.tabs { flex: none; display: flex; height: 14px; padding-left: 48px; border-bottom: 2px solid #3f7fa0; background: #fff; }
.tab { display: flex; align-items: center; gap: 2px; padding: 0 6px 0 3px; white-space: nowrap; line-height: 12px; }
.tab svg { width: 9px; height: 9px; }
.tab.on { background: #00628f; color: #e4f1f7; padding: 0 3px; }
.tab em { font-style: normal; padding-left: 1px; }
.view { position: relative; flex: 1; padding: 2px 6px; background: linear-gradient(#b7b8b9, #c9cacb 30%, #dadbdc 52%, #e5e7e8 75%, #e7e8ea); border-bottom: 1px solid #bbb; border-right: 1px solid #ccc; }
.info, .legend { font-family: "Liberation Sans", sans-serif; font-size: 8px; line-height: 11px; white-space: pre; color: #46506c; }
.range { margin-top: 15px; }
.legend { display: flex; gap: 5px; margin-top: 29px; }
.legend li { height: 23px; line-height: 23px; }
.scale { width: 13px; margin: 11px 0 12px; border: solid #e4ecf4; border-width: 0 1px; background: repeating-linear-gradient(transparent 0 22px, rgba(255,255,255,.6) 22px 23px), linear-gradient(#f00, #f80 17%, #f6ee00 33%, #d0ec00 37%, #58d800 43%, #00d000 50%, #00dc90 58%, #00e4ff 67%, #009cff 77%, #0060ff 88%, #0008ff); }
.unit { margin-top: 7px; }
.model { position: absolute; left: 233px; top: 97px; width: 200px; height: 160px; }
.triad { position: absolute; right: 21px; bottom: 30px; width: 60px; height: 60px; font: 6px "Liberation Sans", sans-serif; }
.status { flex: none; height: 11px; background: #fff; border-bottom: 1px solid #444; }

.dialog { position: absolute; left: 103px; top: 7px; width: 209px; height: 238px; background: #efefef; box-shadow: 0 0 2px #999; }
.dialog > header { display: flex; align-items: center; gap: 6px; height: 14px; padding: 0 5px 0 4px; background: #005f8e; color: #e4f1f7; font-size: 8px; line-height: 14px; }
.dialog > header svg { width: 7px; height: 7px; }
.dialog strong { flex: 1; font-weight: 400; }
.dialog header button { font-weight: 700; }
.frame { height: 197px; margin: 3px 5px 0; overflow: hidden; border: 1px solid #ddd; background: #fff; }
.dialog table { width: 100%; height: 202px; border-collapse: separate; border-spacing: 0; table-layout: fixed; }
.dialog th { height: 12px; padding: 0 3px; background: #ececec; border-right: 1px solid #ddd; font-weight: 400; text-align: left; line-height: 11px; }
.dialog th:nth-child(2), .dialog th:nth-child(3) { width: 35px; }
.dialog th:nth-child(4) { width: 5px; padding: 0; }
.dialog td { height: 11px; padding: 0 0 0 1px; line-height: 10px; border: solid #f0f0f0; border-width: 0 1px 1px 0; white-space: nowrap; }
.dialog tr:nth-child(even) td { background: #fafafa; }
.dialog td svg, .dialog td b { display: inline-block; vertical-align: middle; width: 8px; height: 8px; line-height: 7px; }
.dialog td svg { margin-right: 1px; }
.dialog td + td { padding-left: 2px; }
.dialog .d1 { padding-left: 10px; }
.dialog .d2 { padding-left: 19px; }
.dialog mark { background: none; }
.dialog tr.hit td { background: #a0cecb; border-color: #83b5b4; }
.dialog tr.hit td:first-child { background: linear-gradient(90deg, #fafafa 26px, #a0cecb 26px); }
.dialog tr.hit td:last-child { background: #fff; border-color: #f0f0f0; }
.dialog > footer { display: flex; justify-content: flex-end; padding: 7px 8px; }
.dialog > footer button { width: 28px; height: 13px; background: #005f8e; color: #e4f1f7; }
.cursor { position: absolute; left: 158px; top: 88px; width: 20px; height: 20px; }

.pill { position: absolute; left: 383px; top: 1px; width: 45px; height: 5px; border-radius: 3px; background: linear-gradient(90deg, #50c890 35%, #044a6c 36%); }
.ime { position: absolute; left: 413px; top: 5px; display: flex; align-items: center; justify-content: space-between; width: 102px; height: 16px; padding-right: 3px; background: #fff; color: #1c6fd0; font: 10px/16px "Open Sans", sans-serif; }
.ime svg { width: 9px; height: 9px; }
.ime .logo { width: 18px; height: 18px; }
.mark { position: absolute; right: 0; top: 11px; display: flex; align-items: center; width: 153px; height: 17px; }
.ev { width: 27px; height: 16px; border-radius: 2px; background: rgba(255,255,255,.65); color: #4fa4cf; text-align: center; font: italic 12px/14px "Open Sans", sans-serif; }
.strip { position: absolute; left: 27px; top: 4px; width: 75px; height: 12px; background: rgba(255,255,255,.6); }
.name { position: absolute; left: 35px; top: 1px; font-size: 15px; line-height: 15px; color: #fff; text-shadow: 0 0 1px #7ba4bd; white-space: nowrap; }
.show { position: absolute; left: 99px; top: -2px; font-size: 15px; line-height: 15px; color: #3d9258; white-space: nowrap; opacity: .8; }
.clock { position: absolute; left: 648px; top: 42px; width: 27px; height: 27px; border: 1px solid #cfe3fb; border-radius: 50%; background: linear-gradient(#3b8cec 60%, #5aa8f6 60%); color: #fff; text-align: center; font-size: 8px; line-height: 25px; }
```
